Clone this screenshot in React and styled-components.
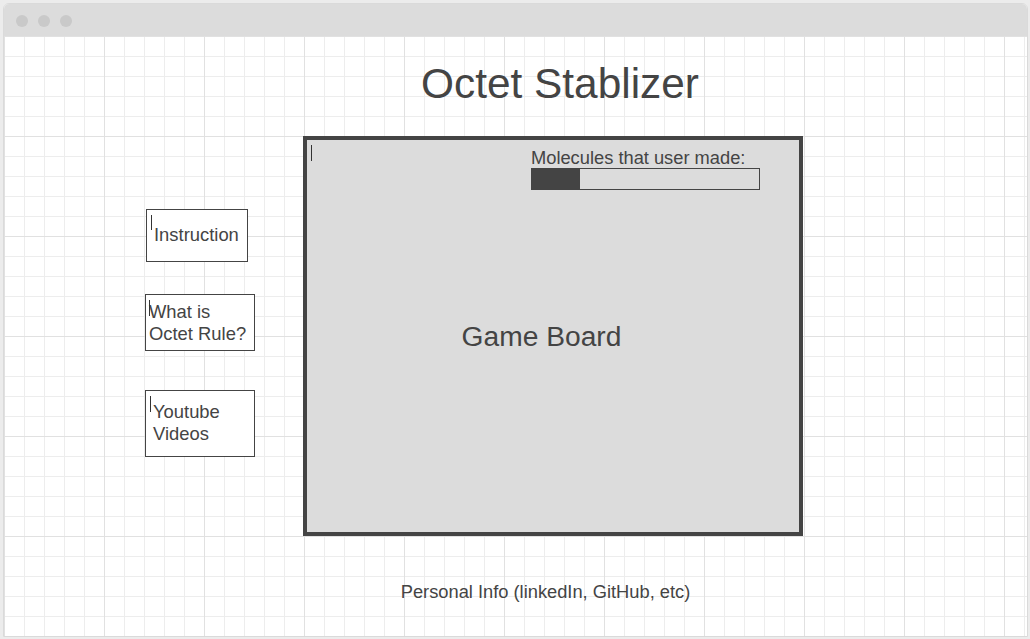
import React from 'react'
import styled, { createGlobalStyle } from 'styled-components'

const GlobalStyle = createGlobalStyle`
    html, body {
        margin: 0;
        padding: 0;
        background: #ececec;
    }
    body {
        font-family: "Liberation Sans", Arial, sans-serif;
        color: #444;
    }
`

const sideLinks = [
    { lines: ['Instruction'], w: 102, h: 53, top: 73, left: 1, padTop: 14, padLeft: 7, lh: 21, caretLeft: 4, caretH: 15 },
    { lines: ['What is', 'Octet Rule?'], w: 110, h: 57, top: 32, left: 0, padTop: 6, padLeft: 3, lh: 21.5, caretLeft: 3, caretH: 16 },
    { lines: ['Youtube', 'Videos'], w: 110, h: 67, top: 39, left: 0, padTop: 10, padLeft: 7, lh: 21.5, caretLeft: 4, caretH: 16 },
]

function App() {
    const made = 0.21
    return (
        <>
            <GlobalStyle />
            <Window>
                <TitleBar>
                    <Dot />
                    <Dot />
                    <Dot />
                </TitleBar>
                <Canvas>
                    <Header>
                        <h1>Octet Stablizer</h1>
                    </Header>
                    <Main>
                        <Sidebar>
                            {sideLinks.map((item, index) => (
                                <SideButton
                                    key={index}
                                    $w={item.w}
                                    $h={item.h}
                                    $top={item.top}
                                    $left={item.left}
                                    $padTop={item.padTop}
                                    $padLeft={item.padLeft}
                                    $lh={item.lh}
                                >
                                    <Caret $left={item.caretLeft} $top={5} $h={item.caretH} />
                                    {item.lines.map((line, i) => (
                                        <span key={i}>{line}</span>
                                    ))}
                                </SideButton>
                            ))}
                        </Sidebar>
                        <Board>
                            <Caret $left={4} $top={5} $h={16} />
                            <Progress>
                                <p>Molecules that user made:</p>
                                <Bar>
                                    <div style={{ width: `${made * 100}%` }} />
                                </Bar>
                            </Progress>
                            <BoardLabel>Game Board</BoardLabel>
                        </Board>
                    </Main>
                    <Footer>Personal Info (linkedIn, GitHub, etc)</Footer>
                </Canvas>
            </Window>
        </>
    )
}

const Window = styled.div`
    margin: 3px 0 0 3px;
    width: 1025px;
    height: 634px;
    box-sizing: border-box;
    border: 1px solid #dadada;
    border-radius: 6px 6px 0 0;
    overflow: hidden;
    background: #fff;
    display: flex;
    flex-direction: column;
`

const TitleBar = styled.div`
    height: 32px;
    flex-shrink: 0;
    background: #dcdcdc;
    display: flex;
    align-items: center;
    gap: 10px;
    padding-left: 12px;
    padding-top: 1px;
    box-sizing: border-box;
`

const Dot = styled.span`
    width: 12px;
    height: 12px;
    border-radius: 50%;
    background: #c9c9c9;
`

const Canvas = styled.div`
    flex: 1;
    background-color: #fff;
    background-image:
        linear-gradient(to right, #e1e1e1 1px, transparent 1px),
        linear-gradient(to bottom, #e1e1e1 1px, transparent 1px),
        linear-gradient(to right, #ededed 1px, transparent 1px),
        linear-gradient(to bottom, #ededed 1px, transparent 1px);
    background-size: 100px 100px, 100px 100px, 20px 20px, 20px 20px;
    display: flex;
    flex-direction: column;
`

const Header = styled.header`
    height: 100px;
    display: flex;
    justify-content: center;
    padding-left: 89px;
    box-sizing: border-box;
    h1 {
        margin: 0;
        padding-top: 24px;
        font-size: 42.4px;
        line-height: 48px;
        font-weight: 400;
        color: #444;
    }
`

const Main = styled.div`
    height: 400px;
    display: flex;
    padding-left: 141px;
`

const Sidebar = styled.div`
    width: 110px;
    margin-right: 48px;
    display: flex;
    flex-direction: column;
    align-items: flex-start;
`

const SideButton = styled.div`
    position: relative;
    width: ${p => p.$w}px;
    height: ${p => p.$h}px;
    margin-top: ${p => p.$top}px;
    margin-left: ${p => p.$left}px;
    box-sizing: border-box;
    border: 1px solid #444;
    background: #fff;
    padding: ${p => p.$padTop}px 0 0 ${p => p.$padLeft}px;
    display: flex;
    flex-direction: column;
    font-size: 18.4px;
    line-height: ${p => p.$lh}px;
    color: #444;
    white-space: nowrap;
`

const Caret = styled.span`
    position: absolute;
    left: ${p => p.$left}px;
    top: ${p => p.$top}px;
    width: 1px;
    height: ${p => p.$h}px;
    background: #333;
`

const Board = styled.div`
    position: relative;
    width: 500px;
    height: 400px;
    box-sizing: border-box;
    border: 4px solid #444;
    background: #dcdcdc;
    display: grid;
    grid-template-columns: 1fr;
    grid-template-rows: 1fr;
`

const Progress = styled.div`
    grid-area: 1 / 1;
    justify-self: end;
    align-self: start;
    width: 229px;
    margin: 8px 39px 0 0;
    p {
        margin: 0;
        font-size: 18.3px;
        line-height: 20px;
        color: #444;
        white-space: nowrap;
    }
`

const Bar = styled.div`
    height: 22px;
    box-sizing: border-box;
    border: 1px solid #444;
    div {
        height: 100%;
        background: #444;
    }
`

const BoardLabel = styled.div`
    grid-area: 1 / 1;
    justify-self: center;
    align-self: center;
    margin: 0 23px 0 0;
    font-size: 28.2px;
    line-height: 32px;
    color: #444;
`

const Footer = styled.footer`
    padding-top: 45px;
    padding-left: 60px;
    text-align: center;
    font-size: 18.3px;
    line-height: 21px;
    color: #444;
`

export default App
